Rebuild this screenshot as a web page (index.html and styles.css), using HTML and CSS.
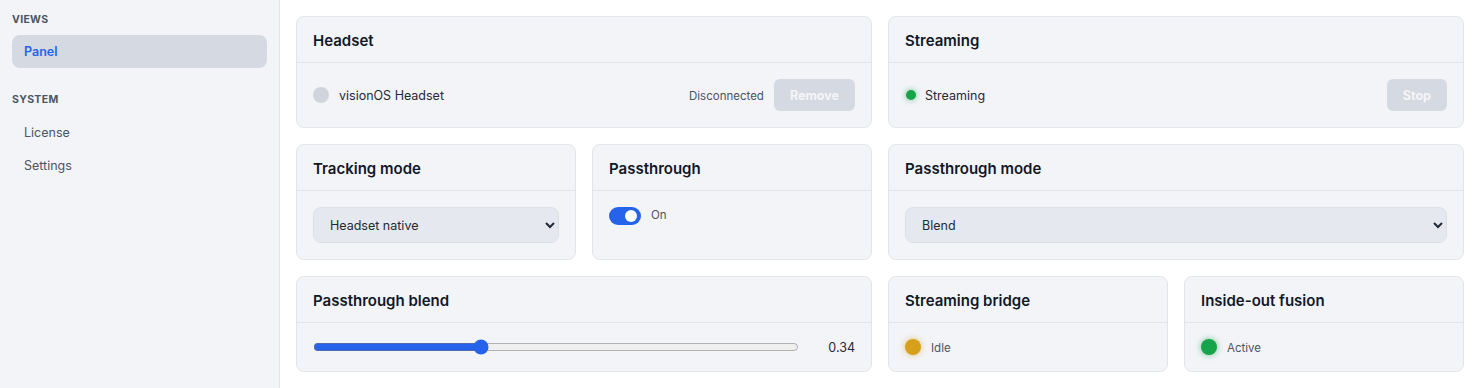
FILE: index.html
```html
<!DOCTYPE html>
<html lang="en">
<head>
    <meta charset="UTF-8">
    <meta name="viewport" content="width=device-width, initial-scale=1.0">
    <title>Panel</title>
    <link rel="stylesheet" href="styles.css">
</head>
<body>
    <div class="app">
        <aside class="sidebar">
            <div class="nav-label">Views</div>
            <a class="nav-item active" href="#">Panel</a>
            <div class="nav-label">System</div>
            <a class="nav-item" href="#">License</a>
            <a class="nav-item" href="#">Settings</a>
        </aside>

        <main class="grid">
            <section class="card span-2">
                <div class="card-head">Headset</div>
                <div class="card-body row">
                    <span class="dot dot-big dot-off"></span>
                    <span class="label">visionOS Headset</span>
                    <span class="status push">Disconnected</span>
                    <button class="btn" disabled>Remove</button>
                </div>
            </section>

            <section class="card span-2">
                <div class="card-head">Streaming</div>
                <div class="card-body row">
                    <span class="dot dot-small dot-green"></span>
                    <span class="label">Streaming</span>
                    <button class="btn push" disabled>Stop</button>
                </div>
            </section>

            <section class="card">
                <div class="card-head">Tracking mode</div>
                <div class="card-body">
                    <select class="select">
                        <option>Headset native</option>
                    </select>
                </div>
            </section>

            <section class="card">
                <div class="card-head">Passthrough</div>
                <div class="card-body row top">
                    <span class="toggle on"><span class="knob"></span></span>
                    <span class="status">On</span>
                </div>
            </section>

            <section class="card span-2">
                <div class="card-head">Passthrough mode</div>
                <div class="card-body">
                    <select class="select">
                        <option>Blend</option>
                    </select>
                </div>
            </section>

            <section class="card span-2">
                <div class="card-head">Passthrough blend</div>
                <div class="card-body row">
                    <input class="range" type="range" min="0" max="1" step="0.01" value="0.34">
                    <span class="value">0.34</span>
                </div>
            </section>

            <section class="card">
                <div class="card-head">Streaming bridge</div>
                <div class="card-body row">
                    <span class="dot dot-big dot-yellow"></span>
                    <span class="status">Idle</span>
                </div>
            </section>

            <section class="card">
                <div class="card-head">Inside-out fusion</div>
                <div class="card-body row">
                    <span class="dot dot-big dot-green"></span>
                    <span class="status">Active</span>
                </div>
            </section>
        </main>
    </div>
</body>
</html>
```

FILE: styles.css
```css
body {
    font-family: "Segoe UI", Inter, "Noto Sans", sans-serif;
    background-color: #ffffff;
    color: #1f2937;
    margin: 0;
    padding: 0;
}
.app {
    display: flex;
    min-height: 388px;
}
.sidebar {
    width: 280px;
    flex-shrink: 0;
    background-color: #f3f4f7;
    border-right: 1px solid #e2e4ea;
    padding: 12px 12px;
    box-sizing: border-box;
}
.nav-label {
    font-size: 10.5px;
    line-height: 16px;
    font-weight: 700;
    letter-spacing: 0.03em;
    text-transform: uppercase;
    color: #4b5563;
    margin-bottom: 7px;
}
.nav-item + .nav-label {
    margin-top: 24px;
    margin-bottom: 8px;
}
.nav-item {
    display: block;
    height: 33px;
    line-height: 34px;
    padding: 0 12px;
    border-radius: 8px;
    font-size: 12.5px;
    color: #4b5563;
    text-decoration: none;
}
.nav-item.active {
    background-color: #d5d9e1;
    color: #2563eb;
    font-weight: 600;
}
.grid {
    flex: 1;
    display: grid;
    grid-template-columns: repeat(4, 1fr);
    gap: 16px;
    align-content: start;
    padding: 16px 8px 16px 16px;
}
.card {
    display: flex;
    flex-direction: column;
    background-color: #f3f4f8;
    border: 1px solid #e1e4ea;
    border-radius: 8px;
}
.span-2 {
    grid-column: span 2;
}
.card-head {
    padding: 13px 16px 11px;
    font-size: 15px;
    line-height: 21px;
    font-weight: 600;
    color: #111827;
    border-bottom: 1px solid #e3e5eb;
}
.card-body {
    flex: 1;
    padding: 16px;
}
.row {
    display: flex;
    align-items: center;
    gap: 10px;
}
.row.top {
    align-items: flex-start;
}
.label {
    font-size: 12.5px;
    color: #1f2937;
    padding-top: 1px;
}
.status {
    font-size: 11.5px;
    color: #4b5563;
    padding-top: 1px;
}
.push {
    margin-left: auto;
}
.dot {
    display: inline-block;
    border-radius: 50%;
    flex-shrink: 0;
}
.dot-big {
    width: 16px;
    height: 16px;
}
.dot-small {
    width: 10px;
    height: 10px;
    margin-left: 1px;
    margin-right: -1px;
}
.dot-off {
    background-color: #d1d5db;
}
.dot-green {
    background-color: #16a34a;
    box-shadow: 0 0 6px rgba(22, 163, 74, 0.6);
}
.dot-yellow {
    background-color: #d6a01a;
    box-shadow: 0 0 6px rgba(214, 160, 26, 0.6);
}
.btn {
    height: 32px;
    padding: 0 16px;
    border: none;
    border-radius: 6px;
    background-color: #d5d9e1;
    color: #f4f5f8;
    font-family: inherit;
    font-size: 12.5px;
    font-weight: 700;
}
.select {
    width: 100%;
    height: 36px;
    padding: 0 12px;
    border: 1px solid #dde0e7;
    border-radius: 8px;
    background-color: #e6e8ef;
    color: #1f2937;
    font-family: inherit;
    font-size: 12.5px;
}
.toggle {
    position: relative;
    display: inline-block;
    width: 32px;
    height: 18px;
    border-radius: 9px;
    background-color: #2563eb;
}
.toggle .knob {
    position: absolute;
    top: 3px;
    right: 4px;
    width: 12px;
    height: 12px;
    border-radius: 50%;
    background-color: #ffffff;
}
.range {
    flex: 1;
    margin: 0;
    accent-color: #2563eb;
}
.value {
    width: 46px;
    text-align: right;
    font-size: 12.5px;
    color: #1f2937;
    padding-top: 1px;
}
```
